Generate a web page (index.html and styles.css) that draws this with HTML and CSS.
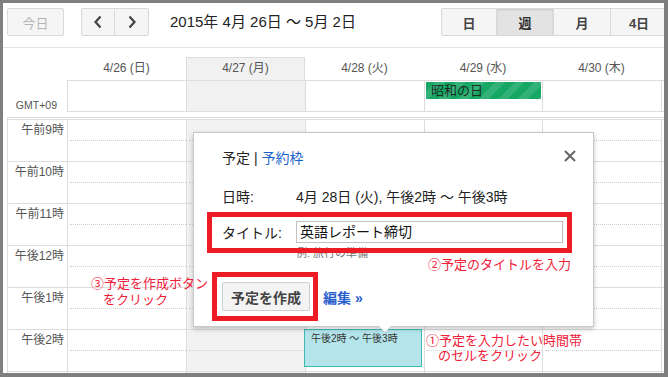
FILE: index.html
```html
<!DOCTYPE html>
<html lang="ja">
<head>
<meta charset="utf-8">
<title>カレンダー</title>
<link rel="stylesheet" href="styles.css">
</head>
<body>
<div class="frame">
  <div class="toolbar">
    <button class="btn today">今日</button>
    <div class="nav">
      <button class="btn navbtn"><svg width="10" height="14" viewBox="0 0 10 14"><polyline points="7.5,1.5 2.5,7 7.5,12.5" fill="none" stroke="#444" stroke-width="2.2"/></svg></button>
      <button class="btn navbtn"><svg width="10" height="14" viewBox="0 0 10 14"><polyline points="2.5,1.5 7.5,7 2.5,12.5" fill="none" stroke="#444" stroke-width="2.2"/></svg></button>
    </div>
    <div class="range">2015年 4月 26日 ～ 5月 2日</div>
    <div class="views">
      <button class="btn view">日</button>
      <button class="btn view on">週</button>
      <button class="btn view">月</button>
      <button class="btn view">4日</button>
    </div>
  </div>

  <div class="head">
    <div class="hcell"></div>
    <div class="hcell">4/26 (日)</div>
    <div class="hcell today-col">4/27 (月)</div>
    <div class="hcell">4/28 (火)</div>
    <div class="hcell">4/29 (水)</div>
    <div class="hcell">4/30 (木)</div>
    <div class="hcell"></div>

    <div class="tz">GMT+09</div>
    <div class="allday"></div>
    <div class="allday gray"></div>
    <div class="allday"></div>
    <div class="allday"><div class="holiday">昭和の日</div></div>
    <div class="allday"></div>
    <div class="allday"></div>
  </div>

  <div class="grid">
    <div class="tcell">午前9時</div>
    <div class="dcell"><div class="half"></div></div><div class="dcell gray"><div class="half"></div></div><div class="dcell"><div class="half"></div></div><div class="dcell"><div class="half"></div></div><div class="dcell"><div class="half"></div></div><div class="dcell"></div>
    <div class="tcell">午前10時</div>
    <div class="dcell"><div class="half"></div></div><div class="dcell gray"><div class="half"></div></div><div class="dcell"><div class="half"></div></div><div class="dcell"><div class="half"></div></div><div class="dcell"><div class="half"></div></div><div class="dcell"></div>
    <div class="tcell">午前11時</div>
    <div class="dcell"><div class="half"></div></div><div class="dcell gray"><div class="half"></div></div><div class="dcell"><div class="half"></div></div><div class="dcell"><div class="half"></div></div><div class="dcell"><div class="half"></div></div><div class="dcell"></div>
    <div class="tcell">午後12時</div>
    <div class="dcell"><div class="half"></div></div><div class="dcell gray"><div class="half"></div></div><div class="dcell"><div class="half"></div></div><div class="dcell"><div class="half"></div></div><div class="dcell"><div class="half"></div></div><div class="dcell"></div>
    <div class="tcell">午後1時</div>
    <div class="dcell"><div class="half"></div></div><div class="dcell gray"><div class="half"></div></div><div class="dcell"><div class="half"></div></div><div class="dcell"><div class="half"></div></div><div class="dcell"><div class="half"></div></div><div class="dcell"></div>
    <div class="tcell">午後2時</div>
    <div class="dcell"><div class="half"></div></div><div class="dcell gray"><div class="half"></div></div><div class="dcell"><div class="event">午後2時 ～ 午後3時</div></div><div class="dcell"><div class="half"></div></div><div class="dcell"><div class="half"></div></div><div class="dcell"></div>
    <div class="tcell"></div>
    <div class="dcell"></div><div class="dcell gray"></div><div class="dcell"></div><div class="dcell"></div><div class="dcell"></div><div class="dcell"></div>
  </div>

  <div class="popup">
    <svg class="close" width="12" height="12" viewBox="0 0 12 12"><path d="M1 1 L11 11 M11 1 L1 11" stroke="#666" stroke-width="2" fill="none"/></svg>
    <div class="tabs">予定 | <span class="link">予約枠</span></div>
    <div class="prow date"><span class="plabel">日時:</span><span>4月 28日 (火), 午後2時 ～ 午後3時</span></div>
    <div class="prow title"><span class="plabel">タイトル:</span><div class="input">英語レポート締切</div></div>
    <div class="hint">例: 旅行の準備</div>
    <div class="actions"><button class="create">予定を作成</button><span class="edit">編集 »</span></div>
  </div>

  <div class="redbox box1"></div>
  <div class="redbox box2"></div>
  <div class="note n2">②予定のタイトルを入力</div>
  <div class="note n3"><span class="l1">③予定を作成ボタン</span><span class="l2">をクリック</span></div>
  <div class="note n1"><span class="l1">①予定を入力したい時間帯</span><span class="l2">のセルをクリック</span></div>
</div>
</body>
</html>
```

FILE: styles.css
```css
* { box-sizing: border-box; }
html, body { margin: 0; padding: 0; }
body {
  background: #7f7f7f;
  font-family: "Liberation Sans", "Noto Sans CJK JP", sans-serif;
  width: 668px;
  height: 377px;
  overflow: hidden;
}
.frame {
  position: relative;
  margin: 3px 0 0 3px;
  width: 661px;
  height: 370px;
  background: #fff;
  overflow: hidden;
}

/* toolbar */
.toolbar {
  display: flex;
  align-items: flex-start;
  height: 45px;
  padding: 5px 0 0 4px;
  border-bottom: 1px solid #e5e5e5;
}
.btn {
  font-family: inherit;
  height: 28px;
  border: 1px solid #d9d9d9;
  background: #f5f5f5;
  border-radius: 2px;
  padding: 0;
  margin: 0;
  color: #444;
  font-size: 13px;
  display: flex;
  align-items: center;
  justify-content: center;
}
.today { width: 57px; color: #b5b5b5; flex: none; }
.nav { display: flex; margin-left: 17px; flex: none; }
.navbtn { width: 34px; }
.navbtn:first-child { border-radius: 2px 0 0 2px; }
.navbtn:last-child { border-radius: 0 2px 2px 0; border-left: none; width: 34px; }
.range {
  flex: 1;
  margin-left: 21px;
  font-size: 15px;
  line-height: 28px;
  color: #222;
  white-space: nowrap;
}
.views { display: flex; flex: none; margin-right: -4px; }
.view { width: 57px; font-weight: bold; border-radius: 0; border-left: none; }
.view:first-child { width: 56px; border-left: 1px solid #d9d9d9; border-radius: 2px 0 0 2px; }
.view.on { background: #e3e3e3; box-shadow: inset 0 1px 2px rgba(0,0,0,0.12); color: #333; }

/* header */
.head {
  display: grid;
  grid-template-columns: 64px 119px 119px 119px 118px 119px 3px;
  grid-template-rows: 23px 32px;
  margin-top: 9px;
}
.hcell {
  border-top: 1px solid transparent;
  font-size: 12px;
  line-height: 21px;
  text-align: center;
  color: #555;
  white-space: nowrap;
}
.today-col {
  background: #f1f1f1;
  border: 1px solid #ddd;
  border-bottom: none;
}
.tz {
  font-size: 10.5px;
  color: #555;
  text-align: right;
  padding-right: 10px;
  align-self: end;
  line-height: 12px;
  padding-bottom: 1px;
}
.allday {
  border-top: 1px solid #ddd;
  border-bottom: 1px solid #ddd;
  border-left: 1px solid #ddd;
  padding: 1px 1px 0 1px;
}
.allday.gray { background: #f1f1f1; }
.holiday {
  height: 17px;
  background-color: #16a765;
  background-image: repeating-linear-gradient(135deg, rgba(255,255,255,0) 0 7px, rgba(255,255,255,0.12) 7px 14px);
  color: #1d2d24;
  font-size: 13px;
  line-height: 17px;
  padding-left: 5px;
}

/* time grid */
.grid {
  display: grid;
  grid-template-columns: 59px 119px 119px 119px 118px 119px 3px;
  grid-auto-rows: 42px;
  margin: 5px 0 0 4px;
  border-top: 1px solid #ddd;
  border-left: 1px solid #ddd;
  padding-top: 1px;
}
.tcell {
  border-top: 1px solid #ddd;
  font-size: 12px;
  line-height: 14px;
  padding: 3px 3px 0 0;
  text-align: right;
  color: #555;
  white-space: nowrap;
}
.dcell {
  border-top: 1px solid #ddd;
  border-left: 1px solid #ddd;
}
.dcell.gray { background: #f2f2f2; }
.half {
  height: 21px;
  margin-left: 2px;
  border-bottom: 1px dotted #cfcfcf;
}
.event {
  margin: -1px 0 0 -2px;
  width: 118px;
  height: 38px;
  background: #b3e5ea;
  border: 1px solid #3fb9b3;
  font-size: 10px;
  line-height: 14px;
  padding: 2px 0 0 6px;
  color: #333;
  white-space: nowrap;
  position: relative;
}

/* popup */
.popup {
  position: absolute;
  left: 190px;
  top: 129px;
  width: 401px;
  height: 195px;
  background: #fff;
  border: 1px solid #c8c8c8;
  box-shadow: 0 2px 5px rgba(0,0,0,0.22);
  padding: 17px 0 0 28px;
  font-size: 14px;
  color: #222;
}
.popup::before, .popup::after {
  content: "";
  position: absolute;
  left: 184px;
  border: 7px solid transparent;
  border-bottom: none;
}
.popup::before { top: 100%; border-top-color: #c8c8c8; }
.popup::after { top: calc(100% - 1px); border-top-color: #fff; }
.close { position: absolute; right: 17px; top: 17px; }
.tabs { line-height: 16px; font-size: 14px; white-space: nowrap; }
.link { color: #1a5fcc; }
.prow { display: flex; align-items: center; white-space: nowrap; }
.plabel { width: 74px; flex: none; }
.date { margin-top: 23px; line-height: 16px; }
.title { margin-top: 16px; height: 22px; }
.input {
  width: 267px;
  height: 22px;
  border: 1px solid #c0c0c0;
  font-size: 14px;
  line-height: 20px;
  padding-left: 3px;
  color: #111;
}
.hint {
  margin-top: 3px;
  padding-left: 74px;
  font-size: 11px;
  line-height: 14px;
  color: #777;
}
.actions { display: flex; align-items: center; margin-top: 22px; }
.create {
  font-family: inherit;
  width: 88px;
  height: 29px;
  margin: 0;
  padding: 0;
  border: 1px solid #cfcfcf;
  border-radius: 2px;
  background: #f3f3f3;
  color: #444;
  font-size: 14px;
  font-weight: bold;
}
.edit { margin-left: 13px; color: #2a5fcf; font-size: 14px; font-weight: bold; }

/* annotations */
.redbox {
  position: absolute;
  border: 5px solid #ed1c24;
}
.box1 { left: 204px; top: 209px; width: 365px; height: 41px; }
.box2 { left: 209px; top: 269px; width: 106px; height: 49px; }
.note {
  position: absolute;
  color: #f0203a;
  font-size: 13px;
  line-height: 15px;
  white-space: nowrap;
}
.note span { display: block; }
.n2 { left: 425px; top: 254px; }
.n3 { left: 88px; top: 273px; line-height: 16px; }
.n3 .l2 { padding-left: 12px; }
.n1 { left: 423px; top: 330px; }
.n1 .l2 { padding-left: 12px; }
```
